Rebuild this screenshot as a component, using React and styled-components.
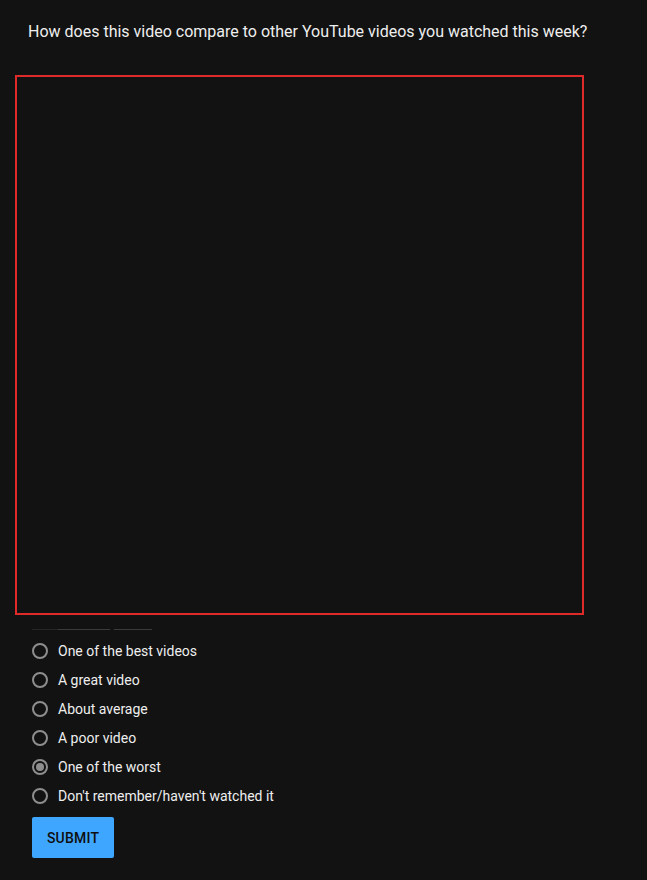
import React, { useState } from 'react'
import styled, { createGlobalStyle } from 'styled-components'

const GlobalStyle = createGlobalStyle`
  body {
    margin: 0;
    background: #121212;
    font-family: Roboto, "Liberation Sans", sans-serif;
  }
`

const Page = styled.div`
  min-height: 880px;
  padding-top: 22px;
  box-sizing: border-box;
  background: #121212;
`

const Question = styled.p`
  margin: 0 0 0 28px;
  font-size: 16px;
  line-height: 20px;
  color: #eeeeee;
`

const Frame = styled.div`
  margin: 33px 0 0 15px;
  width: 569px;
  height: 540px;
  box-sizing: border-box;
  border: 2px solid #df2a2a;
  background: #121212;
`

const Rules = styled.div`
  display: flex;
  margin: 14px 0 0 32px;
  height: 1px;
`

const Rule = styled.span`
  width: ${p => p.w}px;
  height: 1px;
  margin-left: ${p => p.gap || 0}px;
  background: ${p => p.faint ? '#262626' : '#3a3a3a'};
`

const Options = styled.div`
  display: flex;
  flex-direction: column;
  margin: 6px 0 0 32px;
`

const Option = styled.label`
  display: flex;
  align-items: center;
  gap: 10px;
  height: 29px;
  font-size: 14px;
  color: #eeeeee;
  cursor: pointer;
`

const Radio = styled.span`
  width: 16px;
  height: 16px;
  box-sizing: border-box;
  border: 2px solid #8e8e8e;
  border-radius: 50%;
  display: flex;
  align-items: center;
  justify-content: center;
  &::after {
    content: '';
    width: 8px;
    height: 8px;
    border-radius: 50%;
    background: ${p => p.checked ? '#8e8e8e' : 'transparent'};
  }
`

const SubmitButton = styled.button`
  margin: 7px 0 0 32px;
  width: 82px;
  height: 41px;
  border: none;
  border-radius: 2px;
  background: #3ea6ff;
  color: #0f0f0f;
  font-family: Roboto, "Liberation Sans", sans-serif;
  font-size: 14px;
  font-weight: 500;
  letter-spacing: 0.2px;
  cursor: pointer;
`

const choices = [
  'One of the best videos',
  'A great video',
  'About average',
  'A poor video',
  'One of the worst',
  "Don't remember/haven't watched it",
]

export default function App() {
  const [picked, setPicked] = useState(4)
  return (
    <Page>
      <GlobalStyle />
      <Question>How does this video compare to other YouTube videos you watched this week?</Question>
      <Frame />
      <Rules>
        <Rule w={26} faint />
        <Rule w={52} />
        <Rule w={38} gap={4} />
      </Rules>
      <Options>
        {choices.map((c, i) => (
          <Option key={c} onClick={() => setPicked(i)}>
            <Radio checked={picked === i} />
            {c}
          </Option>
        ))}
      </Options>
      <SubmitButton>SUBMIT</SubmitButton>
    </Page>
  )
}
